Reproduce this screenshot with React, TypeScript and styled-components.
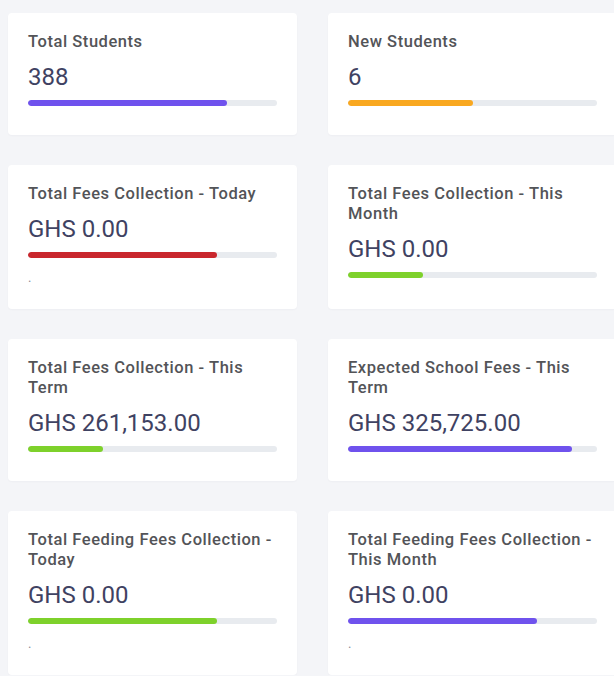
import React from "react";
import styled, { createGlobalStyle } from "styled-components";

const GlobalStyle = createGlobalStyle`
  html, body {
    margin: 0;
    padding: 0;
    overflow: hidden;
    background: #f4f5f8;
    font-family: Roboto, "Liberation Sans", Arial, sans-serif;
  }
`;

const Page = styled.main`
  padding: 13px 0 0 8px;
  width: 620px;
`;

const Grid = styled.div`
  display: grid;
  grid-template-columns: 289px 289px;
  column-gap: 31px;
  row-gap: 30px;
`;

const Card = styled.section`
  background: #ffffff;
  border-radius: 4px;
  padding: 19px 20px 20px;
  box-shadow: 0 1px 2px rgba(30, 40, 70, 0.03);
`;

const Title = styled.h3`
  margin: 0;
  font-size: 16.5px;
  line-height: 20px;
  font-weight: 500;
  letter-spacing: 0.55px;
  color: #535458;
`;

const Value = styled.div`
  margin-top: 11px;
  font-size: 24px;
  line-height: 29px;
  font-weight: 400;
  color: #3f4262;
`;

const Track = styled.div`
  margin: 8px 0 9px;
  height: 6px;
  border-radius: 3px;
  background: #e8ebef;
  overflow: hidden;
`;

const Fill = styled.div<{ $color: string }>`
  height: 100%;
  border-radius: 3px;
  background: ${(p) => p.$color};
`;

const Note = styled.div`
  font-size: 13px;
  line-height: 22px;
  color: #8a8d96;
`;

type Stat = {
  title: string;
  value: string;
  pct: number;
  color: string;
  note?: string;
};

const PURPLE = "#6f52ed";
const ORANGE = "#f9a820";
const RED = "#c9272d";
const GREEN = "#7ed12b";

const stats: Stat[] = [
  { title: "Total Students", value: "388", pct: 80, color: PURPLE },
  { title: "New Students", value: "6", pct: 50, color: ORANGE },
  { title: "Total Fees Collection - Today", value: "GHS 0.00", pct: 76, color: RED, note: "." },
  { title: "Total Fees Collection - This Month", value: "GHS 0.00", pct: 30, color: GREEN },
  { title: "Total Fees Collection - This Term", value: "GHS 261,153.00", pct: 30, color: GREEN },
  { title: "Expected School Fees - This Term", value: "GHS 325,725.00", pct: 90, color: PURPLE },
  { title: "Total Feeding Fees Collection - Today", value: "GHS 0.00", pct: 76, color: GREEN, note: "." },
  { title: "Total Feeding Fees Collection - This Month", value: "GHS 0.00", pct: 76, color: PURPLE, note: "." },
];

export default function App() {
  return (
    <>
      <GlobalStyle />
      <Page>
        <Grid>
          {stats.map((s) => (
            <Card key={s.title}>
              <Title>{s.title}</Title>
              <Value>{s.value}</Value>
              <Track>
                <Fill $color={s.color} style={{ width: `${s.pct}%` }} />
              </Track>
              {s.note && <Note>{s.note}</Note>}
            </Card>
          ))}
        </Grid>
      </Page>
    </>
  );
}
